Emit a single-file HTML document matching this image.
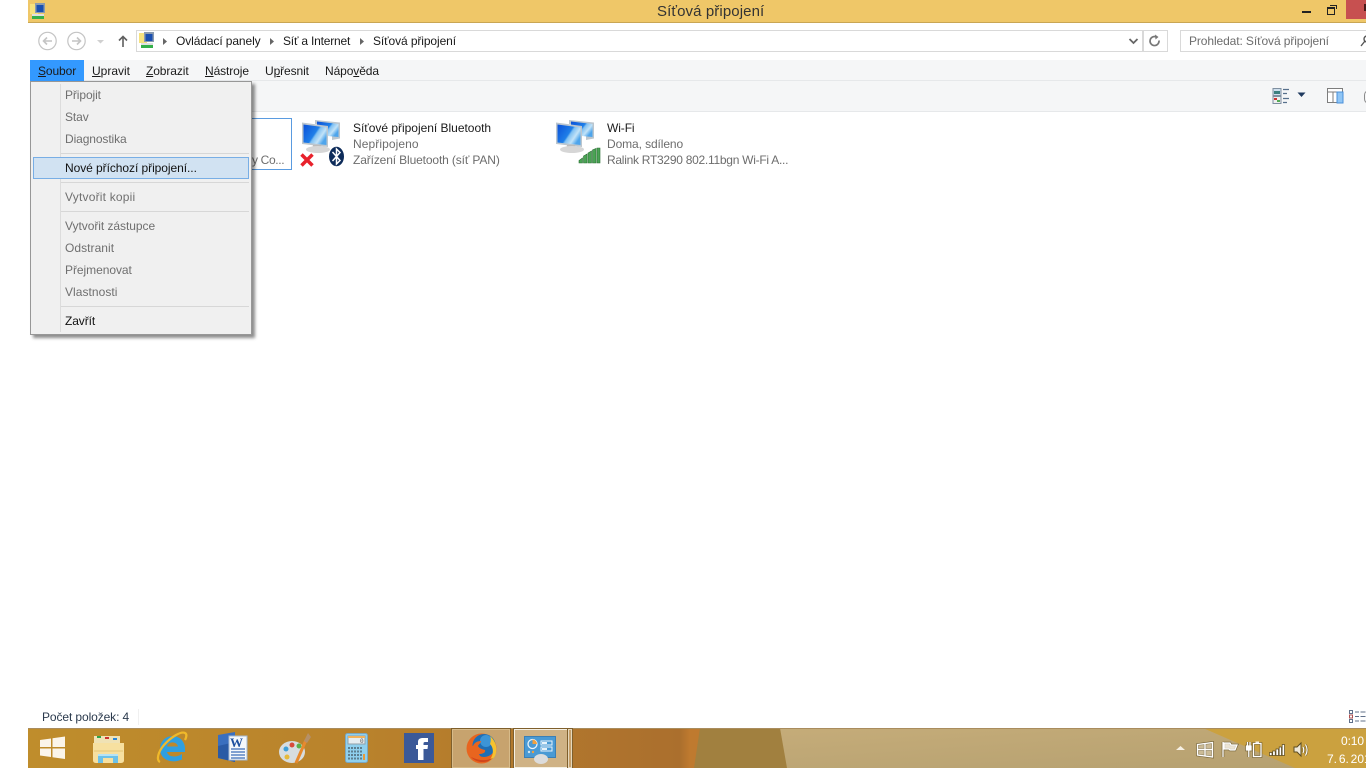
<!DOCTYPE html>
<html lang="cs"><head><meta charset="utf-8"><title>Síťová připojení</title>
<style>
html,body{margin:0;padding:0;background:#fff;width:1366px;height:768px;overflow:hidden}
body{position:relative;font-family:"Liberation Sans",sans-serif;font-size:12px;color:#1a1a1a}
.a{position:absolute;white-space:nowrap}
.t{position:absolute;white-space:nowrap;line-height:16px;height:16px;letter-spacing:-.1px}
.g{color:#6d6d6d}
.m{color:#6f6f6f}
u{text-decoration:underline}
svg{position:absolute;overflow:visible}
</style></head><body>
<!-- title bar -->
<div class="a" style="left:28px;top:0;width:1338px;height:22px;background:#efc768;border-bottom:1px solid #c9a654"></div>
<svg style="left:29px;top:2px" width="18" height="18" viewBox="0 0 18 18"><rect x="1" y="2" width="8" height="10" fill="#f6e27e"/><rect x="6" y="1" width="10" height="10" fill="#8a9bb0"/><rect x="7.500" y="3" width="7" height="7" fill="#1a4fb0"/><rect x="3" y="12" width="12" height="2" fill="#e0e0e0"/><rect x="3" y="14" width="12" height="3" fill="#35b04a"/></svg>
<div class="t" style="left:657px;top:4px;font-size:15px;color:#333;letter-spacing:.1px">Síťová připojení</div>
<div class="a" style="left:1302px;top:11px;width:9px;height:2px;background:#222"></div>
<div class="a" style="left:1330px;top:5px;width:6px;height:3px;border:1px solid #222;border-bottom:0;border-left:0;border-top-width:1px"></div>
<div class="a" style="left:1327px;top:7px;width:6px;height:5px;border:1px solid #222;border-top-width:2px;background:#efc768"></div>
<div class="a" style="left:1346px;top:0;width:20px;height:19px;background:#c75050"></div>
<div class="a" style="left:1364px;top:4px;width:2px;height:7px;background:#4a1a1a"></div>

<!-- nav -->
<svg style="left:36px;top:30px" width="100" height="22" viewBox="0 0 100 22" fill="none" stroke="#c4c4c4">
<circle cx="11.500" cy="11" r="8.700" stroke-width="1.200"/><path d="M16 11H8M11 7.500L7.500 11L11 14.500" stroke-width="1.600"/>
<circle cx="40.500" cy="11" r="8.700" stroke-width="1.200"/><path d="M36 11H44M41 7.500L44.500 11L41 14.500" stroke-width="1.600"/>
<path d="M61 10h7l-3.500 3.500z" fill="#d0d0d0" stroke="none"/>
<path d="M87 17V6.500M83 10.500L87 6.500L91 10.500" stroke="#5f5f5f" stroke-width="1.600"/></svg>
<div class="a" style="left:136px;top:30px;width:1006px;height:20px;border:1px solid #d9d9d9;background:#fff"></div>
<svg style="left:138px;top:31px" width="18" height="18" viewBox="0 0 18 18"><rect x="1" y="2" width="8" height="10" fill="#f6e27e"/><rect x="6" y="1" width="10" height="10" fill="#8a9bb0"/><rect x="7.500" y="3" width="7" height="7" fill="#1a4fb0"/><rect x="3" y="12" width="12" height="2" fill="#e0e0e0"/><rect x="3" y="14" width="12" height="3" fill="#35b04a"/></svg>
<svg style="left:160px;top:36px" width="220" height="10" fill="#666"><path d="M3 2l4 3.500-4 3.500z"/><path d="M110 2l4 3.500-4 3.500z"/><path d="M200 2l4 3.500-4 3.500z"/></svg>
<div class="t" style="left:176px;top:33px">Ovládací panely</div>
<div class="t" style="left:283px;top:33px;letter-spacing:-.2px">Síť a Internet</div>
<div class="t" style="left:373px;top:33px">Síťová připojení</div>
<svg style="left:1128px;top:36px" width="12" height="10" fill="none" stroke="#666" stroke-width="1.800"><path d="M1.500 3L5.500 7L9.500 3"/></svg>
<div class="a" style="left:1142px;top:30px;width:24px;height:20px;border:1px solid #d9d9d9"></div>
<svg style="left:1148px;top:34px" width="14" height="14" fill="none" stroke="#777" stroke-width="1.700"><path d="M11 6.500A4.500 4.500 0 1 1 8 2.800"/><path d="M7 .5L10.500 3L7.500 5.500" fill="#777" stroke="none"/></svg>
<div class="a" style="left:1180px;top:30px;width:190px;height:20px;border:1px solid #d9d9d9;background:#fff"></div>
<div class="t" style="left:1189px;top:33px;color:#6d6d6d">Prohledat: Síťová připojení</div>
<svg style="left:1360px;top:35px" width="8" height="12" fill="none" stroke="#555" stroke-width="1.400"><path d="M5 6L1 11"/><circle cx="7" cy="4" r="3"/></svg>

<!-- menubar -->
<div class="a" style="left:30px;top:60px;width:1336px;height:20px;background:#f5f6f7"></div>
<div class="a" style="left:30px;top:80px;width:1336px;height:1px;background:#e6e8ea"></div>
<div class="a" style="left:30px;top:60px;width:54px;height:21px;background:#3399ff"></div>
<div class="t" style="left:38px;top:63px"><u>S</u>oubor</div>
<div class="t" style="left:92px;top:63px;letter-spacing:0"><u>U</u>pravit</div>
<div class="t" style="left:146px;top:63px"><u>Z</u>obrazit</div>
<div class="t" style="left:205px;top:63px"><u>N</u>ástroje</div>
<div class="t" style="left:265px;top:63px">U<u>p</u>řesnit</div>
<div class="t" style="left:325px;top:63px">Nápo<u>v</u>ěda</div>

<!-- toolbar -->
<div class="a" style="left:30px;top:81px;width:1336px;height:30px;background:#f5f6f7"></div>
<div class="a" style="left:30px;top:111px;width:1336px;height:1px;background:#e6e8ea"></div>
<svg style="left:1272px;top:87px" width="20" height="18"><rect x="1" y="1.500" width="8" height="7" fill="#cfe0ee" stroke="#7f8fa0"/><rect x="2" y="4" width="6" height="3" fill="#3c7f7f"/><rect x="1" y="9.500" width="8" height="7" fill="#eee" stroke="#7f8fa0"/><rect x="2" y="11" width="3" height="2" fill="#c33"/><rect x="5" y="13" width="3" height="2" fill="#5a5"/><path d="M11 2.500h6M11 6.500h4M11 11.500h6M11 15.500h4" stroke="#57708c" stroke-width="1.200"/></svg>
<svg style="left:1297px;top:92px" width="10" height="6"><path d="M.5 .5h8L4.500 5z" fill="#1f3a5f"/></svg>
<svg style="left:1327px;top:88px" width="17" height="16"><rect x=".5" y=".5" width="15" height="14" fill="#fff" stroke="#7d7d7d"/><path d="M.5 4h15M6 4v11" stroke="#7d7d7d"/><rect x="10" y="4" width="6" height="11" fill="#8fc5f5" stroke="#4a90d9"/></svg>
<div class="a" style="left:1364px;top:90px;width:8px;height:12px;border:1px solid #8a8a8a;border-radius:6px"></div>

<!-- selected item fragment -->
<div class="a" style="left:200px;top:118px;width:90px;height:50px;border:1px solid #5a9be0;background:#fff"></div>
<div class="t g" style="left:252px;top:152px;letter-spacing:-.35px">y Co...</div>

<!-- BT item -->
<svg style="left:300px;top:119px" width="46" height="50" viewBox="0 0 46 50">
<defs><linearGradient id="sc" x1="0" y1="0" x2="1" y2=".6"><stop offset="0" stop-color="#0a50d8"/><stop offset=".55" stop-color="#1f7fe8"/><stop offset=".62" stop-color="#7fc0f2"/><stop offset=".82" stop-color="#c2e3f8"/><stop offset="1" stop-color="#4ea5ec"/></linearGradient></defs>
<path d="M15 1L40 3.500V19.500L32 21V7L15 5z" fill="#bcc6ce"/><path d="M17 2.500L38.500 5V18L17 16z" fill="url(#sc)"/>
<path d="M2 3.500L28 7V28L2 25z" fill="#bcc6ce"/><path d="M3.500 5.500L26.500 8.500V26L3.500 23.500z" fill="url(#sc)"/>
<path d="M13 26h8l1 4h-10z" fill="#bcbcbc"/><ellipse cx="18" cy="30.500" rx="12" ry="3.500" fill="#d6d6d6"/>
<path d="M1.500 35.500L12.500 46.500M12.500 35.500L1.500 46.500" stroke="#e8212b" stroke-width="3.500"/>
<ellipse cx="36.500" cy="37.500" rx="7.500" ry="9.800" fill="#0e2c5a"/>
<path d="M32.500 33L40 41.500L36.500 45V30L40 33.500L32.500 42" fill="none" stroke="#fff" stroke-width="1.500"/>
</svg>
<div class="t" style="left:353px;top:120px;letter-spacing:-.02px">Síťové připojení Bluetooth</div>
<div class="t g" style="left:353px;top:136px;letter-spacing:.08px">Nepřipojeno</div>
<div class="t g" style="left:353px;top:152px;letter-spacing:-.13px">Zařízení Bluetooth (síť PAN)</div>

<!-- WiFi item -->
<svg style="left:554px;top:119px" width="48" height="46" viewBox="0 0 48 46">
<path d="M15 1L40 3.500V19.500L32 21V7L15 5z" fill="#bcc6ce"/><path d="M17 2.500L38.500 5V18L17 16z" fill="url(#sc)"/>
<path d="M2 3.500L28 7V28L2 25z" fill="#bcc6ce"/><path d="M3.500 5.500L26.500 8.500V26L3.500 23.500z" fill="url(#sc)"/>
<path d="M13 26h8l1 4h-10z" fill="#bcbcbc"/><ellipse cx="18" cy="30.500" rx="12" ry="3.500" fill="#d6d6d6"/>
<path d="M25 44V41.500L28.500 39V44zM29.500 44V37L33 35V44zM34 44V34L37.500 32V44zM38.500 44V31L42 29.500V44zM43 44V29H46V44z" fill="#4aa354" stroke="#2b7034" stroke-width=".6"/>
</svg>
<div class="t" style="left:607px;top:120px">Wi-Fi</div>
<div class="t g" style="left:607px;top:136px">Doma, sdíleno</div>
<div class="t g" style="left:607px;top:152px;letter-spacing:-.27px">Ralink RT3290 802.11bgn Wi-Fi A...</div>

<!-- dropdown -->
<div class="a" style="left:30px;top:81px;width:220px;height:252px;background:#f0f0f0;border:1px solid #979797;box-shadow:3px 3px 3px rgba(0,0,0,.45)"></div>
<div class="a" style="left:60px;top:84px;width:1px;height:248px;background:#dcdcdc"></div>
<div class="a" style="left:61px;top:153px;width:188px;height:1px;background:#d7d7d7"></div>
<div class="a" style="left:61px;top:182px;width:188px;height:1px;background:#d7d7d7"></div>
<div class="a" style="left:61px;top:211px;width:188px;height:1px;background:#d7d7d7"></div>
<div class="a" style="left:61px;top:306px;width:188px;height:1px;background:#d7d7d7"></div>
<div class="a" style="left:33px;top:157px;width:214px;height:20px;background:#d1e2f2;border:1px solid #78aee5"></div>
<div class="t m" style="left:65px;top:87px">Připojit</div>
<div class="t m" style="left:65px;top:109px">Stav</div>
<div class="t m" style="left:65px;top:131px">Diagnostika</div>
<div class="t" style="left:65px;top:160px;color:#111;letter-spacing:-.06px">Nové příchozí připojení...</div>
<div class="t m" style="left:65px;top:189px;letter-spacing:.2px">Vytvořit kopii</div>
<div class="t m" style="left:65px;top:218px;letter-spacing:-.05px">Vytvořit zástupce</div>
<div class="t m" style="left:65px;top:240px;letter-spacing:.05px">Odstranit</div>
<div class="t m" style="left:65px;top:262px;letter-spacing:-.05px">Přejmenovat</div>
<div class="t m" style="left:65px;top:284px;letter-spacing:.05px">Vlastnosti</div>
<div class="t" style="left:65px;top:313px;color:#111">Zavřít</div>

<!-- status bar -->
<div class="t" style="left:42px;top:709px;color:#2b3a4d">Počet položek: 4</div>
<div class="a" style="left:138px;top:709px;width:1px;height:16px;background:#f0f0f0"></div>
<svg style="left:1349px;top:710px" width="17" height="13" fill="none" stroke="#60708a"><rect x=".5" y=".5" width="3" height="3"/><rect x=".5" y="5" width="3" height="3" stroke="#b05050"/><rect x=".5" y="9.500" width="3" height="3"/><path d="M6 2h4M11.500 2h5M6 6.500h4M11.500 6.500h5M6 11h4M11.500 11h5"/></svg>

<!-- taskbar -->
<svg style="left:28px;top:728px" width="1338" height="40" viewBox="28 728 1338 40">
<defs>
<linearGradient id="tb" x1="28" x2="700" y1="0" y2="0" gradientUnits="userSpaceOnUse"><stop offset="0" stop-color="#bf8d2c"/><stop offset=".5" stop-color="#b9822c"/><stop offset=".97" stop-color="#ab6f2d"/><stop offset=".985" stop-color="#bf7a2f"/><stop offset="1" stop-color="#bf7a2f"/></linearGradient>
<linearGradient id="tan" x1="0" x2="1" y1="0" y2="1"><stop offset="0" stop-color="#c5ac79"/><stop offset="1" stop-color="#b5a070"/></linearGradient>
</defs>
<rect x="28" y="728" width="680" height="40" fill="url(#tb)"/>
<path d="M700 728H782L788 768H694z" fill="#a1803f"/>
<path d="M780 728H1366V768H787z" fill="url(#tan)"/>
<path d="M1203 728H1366V768H1295z" fill="#cba13f"/>
<path d="M28 728H1366" stroke="#a98c5e" stroke-width="1" transform="translate(0 .5)"/>
</svg>
<!-- start -->
<svg style="left:39px;top:734px" width="28" height="28"><path d="M1 6L12 4.500V13H1zM13.500 4.300L26 2.500V13H13.500zM1 14.500H12V23L1 21.500zM13.500 14.500H26V25L13.500 23.200z" fill="#fbf5ea"/></svg>
<!-- explorer -->
<svg style="left:92px;top:734px" width="34" height="32"><path d="M2 2H28V10H2z" fill="#f0e2b5"/><rect x="5" y="2" width="4" height="2" fill="#2ea34a"/><rect x="13" y="3" width="4" height="2" fill="#c33"/><rect x="21" y="4" width="4" height="2" fill="#2b86d8"/><path d="M1 9H32V26C32 28 31 29 29 29H4C2 29 1 28 1 26z" fill="#f7e0a0"/><path d="M2 17H31" stroke="#e6c675"/><path d="M6 20H26V29H21V24H11V29H6z" fill="#6cc1e8"/><path d="M6 20H26V22H6z" fill="#b6e3f5"/></svg>
<!-- IE -->
<svg style="left:155px;top:731px" width="34" height="36" viewBox="0 0 34 36"><path d="M5 18A12.500 12.500 0 0 1 30 17V21H12C13 26 21 27 27 23V28.500C17 33 5 29 5 18zM12 15.500H23C22 10 13 10 12 15.500z" fill="#2f9fe0" fill-rule="evenodd"/><path d="M5 31C1 29 3 21 9 14C16 6 26 0 30 2C32 3 31.500 6 30 9" fill="none" stroke="#f0b92a" stroke-width="2.200"/></svg>
<!-- Word -->
<svg style="left:217px;top:732px" width="32" height="32"><path d="M1 3L18 0V30L1 26z" fill="#3a6fbf"/><path d="M1 14L18 10V30L1 26z" fill="#2a5aa5"/><rect x="12" y="4" width="18" height="24" fill="#f4f7fb" stroke="#a5b9d3"/><path d="M14 17h14M14 20h14M14 23h14M14 26h14" stroke="#3b6db8" stroke-width="1.300"/><text x="13" y="15" font-family="Liberation Serif,serif" font-size="13" font-weight="bold" fill="#1d4f9f">W</text></svg>
<!-- Paint -->
<svg style="left:278px;top:732px" width="34" height="34"><ellipse cx="14" cy="20" rx="13" ry="11" fill="#d7dde0"/><circle cx="8" cy="17" r="2.500" fill="#3fa0d8"/><circle cx="14" cy="13" r="2.500" fill="#d84a3a"/><circle cx="21" cy="14" r="2.500" fill="#5ab04a"/><circle cx="9" cy="25" r="2.500" fill="#e6b93a"/><path d="M18 31L28 8" stroke="#e78a2e" stroke-width="3"/><path d="M26 9L30 1L33 5L29 11z" fill="#b59068"/></svg>
<!-- Calc -->
<svg style="left:345px;top:733px" width="24" height="30"><rect x=".5" y=".5" width="22" height="29" rx="2" fill="#8fd0ee" stroke="#7ba7bf"/><rect x="3" y="3" width="17" height="8" fill="#e6edf0" stroke="#90a0a8"/><rect x="3" y="3" width="17" height="2" fill="#f2b35c"/><text x="15" y="10" font-size="6" font-family="Liberation Mono,monospace" fill="#555">0</text><path d="M3 15h14M3 18.500h14M3 22h14M3 25.500h14" stroke="#5d7f90" stroke-width="2" stroke-dasharray="2 1"/><rect x="18" y="21" width="2" height="6" fill="#e89a3a"/></svg>
<!-- FB -->
<div class="a" style="left:404px;top:733px;width:30px;height:30px;background:#3b5998"></div>
<svg style="left:404px;top:733px" width="30" height="30"><path d="M14 27V16H12V12H14V9C14 6 16 5 19 5H24V9H21C20 9 19.500 9.500 19.500 10.500V12H24L23.500 16H19.500V27z" fill="#fff"/></svg>
<!-- FF button -->
<div class="a" style="left:452px;top:729px;width:58px;height:39px;box-sizing:border-box;background:#c7a36e;border:1px solid #d7bb8a;outline:1px solid #7f5f2c"></div>
<svg style="left:466px;top:733px" width="32" height="31" viewBox="0 0 32 31">
<circle cx="15.500" cy="15.500" r="15" fill="#e8651f"/>
<circle cx="18" cy="12.500" r="11.500" fill="#1f6fb5"/>
<circle cx="20" cy="8" r="6" fill="#3c94d6"/>
<path d="M3 8C1 12 1 20 5 25C9 30 20 32 27 25C22 27 15 26 13 21C16 21 20 20 19 17C15 16 13 15 12 13C13 11 15 10 15 8C11 8 8 10 7 13C5 12 4 10 3 8z" fill="#e8651f"/>
<path d="M24 3C30 8 32 16 29 23C27 26 25 27 23 28C28 22 28 15 24 11C25 8 25 5 24 3z" fill="#f6c22f"/>
<path d="M5 24C10 30 21 31 27 25C21 28 13 28 5 24z" fill="#d0451a"/>
</svg>
<!-- CP button -->
<div class="a" style="left:514px;top:729px;width:54px;height:39px;box-sizing:border-box;background:#cfb285;border:1px solid #f5f0e3;outline:1px solid #7f5f2c"></div>
<div class="a" style="left:568px;top:729px;width:4px;height:39px;box-sizing:border-box;background:#c7a06a;border:1px solid #e6d8bc;outline:1px solid #7f5f2c"></div>
<svg style="left:524px;top:736px" width="32" height="30"><rect x=".5" y=".5" width="31" height="21" fill="#4a9ad4" stroke="#3b7fb5"/><circle cx="8.500" cy="8" r="4.500" fill="none" stroke="#e8f3fb" stroke-width="1.300"/><path d="M8.500 8V3.500A4.500 4.500 0 0 1 13 8z" fill="#f0a040"/><rect x="17" y="5" width="11" height="4" fill="#4a9ad4" stroke="#e8f3fb"/><rect x="18" y="6" width="5" height="2" fill="#e8f3fb"/><rect x="17" y="11" width="11" height="4" fill="#4a9ad4" stroke="#e8f3fb"/><rect x="18" y="12" width="5" height="2" fill="#e8f3fb"/><circle cx="5" cy="16" r="1.200" fill="#cfe6f5"/><circle cx="9" cy="16" r="1.200" fill="#f0a040"/><ellipse cx="17" cy="23" rx="7" ry="5" fill="#dcdcdc"/></svg>

<!-- tray -->
<svg style="left:1175px;top:743px" width="12" height="10"><path d="M1 7L5.500 3L10 7z" fill="#f6f0e3"/></svg>
<svg style="left:1197px;top:742px" width="17" height="16"><path d="M.5 2.500L15.500 .5V15L.5 13zM8 1.500V14M.5 7.500H15.500" fill="none" stroke="#5a4a20" stroke-width="2.600" opacity=".75"/><path d="M.5 2.500L15.500 .5V15L.5 13z" fill="#fff" fill-opacity=".25"/><path d="M.5 2.500L15.500 .5V15L.5 13zM8 1.500V14M.5 7.500H15.500" fill="none" stroke="#fff" stroke-width="1.300"/></svg>
<svg style="left:1222px;top:741px" width="16" height="17"><g fill="none" stroke="#5a4a20" stroke-width="2.600" opacity=".75"><path d="M1 1V16"/><path d="M2 2H8L9 4H15L13 9H8L7 8H2z"/></g><path d="M2 2H8L9 4H15L13 9H8L7 8H2z" fill="#fff" fill-opacity=".7"/><g fill="none" stroke="#fff" stroke-width="1.300"><path d="M1 1V16"/><path d="M2 2H8L9 4H15L13 9H8L7 8H2z"/></g></svg>
<svg style="left:1246px;top:741px" width="16" height="17"><g fill="none" stroke="#5a4a20" stroke-width="2.600" opacity=".75"><rect x="7.500" y="2.500" width="7.500" height="13"/><path d="M.5 5H5V9H.5zM1.500 1V5M4 1V5M2.800 9V16"/></g><g fill="none" stroke="#fff" stroke-width="1.300"><rect x="7.500" y="2.500" width="7.500" height="13"/><path d="M9.500 1.200H13"/><path d="M.5 5H5V9H.5zM1.500 1V5M4 1V5M2.800 9V16"/></g><path d="M.5 5H5V9H.5z" fill="#fff"/></svg>
<svg style="left:1269px;top:744px" width="16" height="12"><path d="M.5 8.500h2.500v3H.5zM3.700 7h2.500v4.500H3.700zM7 5h2.500v6.500H7zM10.200 3h2.300v8.500h-2.300zM13.200 .5h2.300v11h-2.300z" fill="#fff" stroke="#5a4a20" stroke-width=".7"/></svg>
<svg style="left:1293px;top:741px" width="16" height="17"><path d="M1 6H4L8 2V15L4 11H1z" fill="#efe9da" stroke="#5a4a20" stroke-width="1"/><path d="M10 6C11 8 11 10 10 12M12.500 3.500C14.500 7 14.500 11 12.500 14.500" fill="none" stroke="#5a4a20" stroke-width="2.400" opacity=".7"/><path d="M10 6C11 8 11 10 10 12M12.500 3.500C14.500 7 14.500 11 12.500 14.500" fill="none" stroke="#fff" stroke-width="1.200"/></svg>
<div class="t" style="left:1341px;top:733px;color:#fff">0:10</div>
<div class="t" style="left:1327px;top:751px;color:#fff;letter-spacing:0;word-spacing:-1.500px">7. 6. 2014</div>
</body></html>
